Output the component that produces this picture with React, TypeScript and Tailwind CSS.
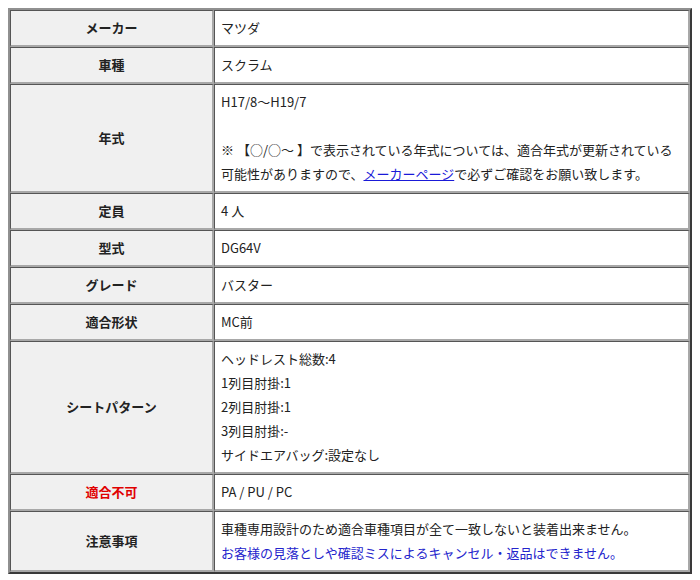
const th = 'w-[30%] bg-[#f0f0f0] text-center align-middle font-bold px-[6px] py-[5px] border-t border-l border-r-2 border-b-2 border-t-[#555] border-l-[#555] border-r-[#a8a8a8] border-b-[#a8a8a8]'
const td = 'bg-white text-left align-middle px-[6px] py-[5px] border-t border-l border-r-2 border-b-2 border-t-[#555] border-l-[#555] border-r-[#a8a8a8] border-b-[#a8a8a8]'

const rows: { label: string; red?: boolean; value: React.ReactNode }[] = [
  { label: 'メーカー', value: 'マツダ' },
  { label: '車種', value: 'スクラム' },
  {
    label: '年式',
    value: (
      <>
        <div>H17/8～H19/7</div>
        <div>&nbsp;</div>
        <div>※ 【○/○～ 】で表示されている年式については、適合年式が更新されている</div>
        <div>
          可能性がありますので、
          <a href="#" className="text-[#1a1ad8] underline">メーカーページ</a>
          で必ずご確認をお願い致します。
        </div>
      </>
    ),
  },
  { label: '定員', value: '4 人' },
  { label: '型式', value: 'DG64V' },
  { label: 'グレード', value: 'バスター' },
  { label: '適合形状', value: 'MC前' },
  {
    label: 'シートパターン',
    value: (
      <>
        <div>ヘッドレスト総数:4</div>
        <div>1列目肘掛:1</div>
        <div>2列目肘掛:1</div>
        <div>3列目肘掛:-</div>
        <div>サイドエアバッグ:設定なし</div>
      </>
    ),
  },
  { label: '適合不可', red: true, value: 'PA / PU / PC' },
  {
    label: '注意事項',
    value: (
      <>
        <div>車種専用設計のため適合車種項目が全て一致しないと装着出来ません。</div>
        <div className="text-[#2424cc]">お客様の見落としや確認ミスによるキャンセル・返品はできません。</div>
      </>
    ),
  },
]

export default function App() {
  return (
    <div className="bg-white p-2 w-[700px] h-[580px] text-[#222] text-[13px] leading-[24px] font-['Noto_Sans_CJK_JP',sans-serif]">
      <table className="w-[684px] border-separate border-spacing-0 border-2 border-t-[#909090] border-l-[#909090] border-r-[#3a3a3a] border-b-[#3a3a3a]">
        <tbody>
          {rows.map((r) => (
            <tr key={r.label}>
              <th className={`${th} ${r.red ? 'text-[#e00000]' : ''}`}>{r.label}</th>
              <td className={td}>{r.value}</td>
            </tr>
          ))}
        </tbody>
      </table>
    </div>
  )
}
